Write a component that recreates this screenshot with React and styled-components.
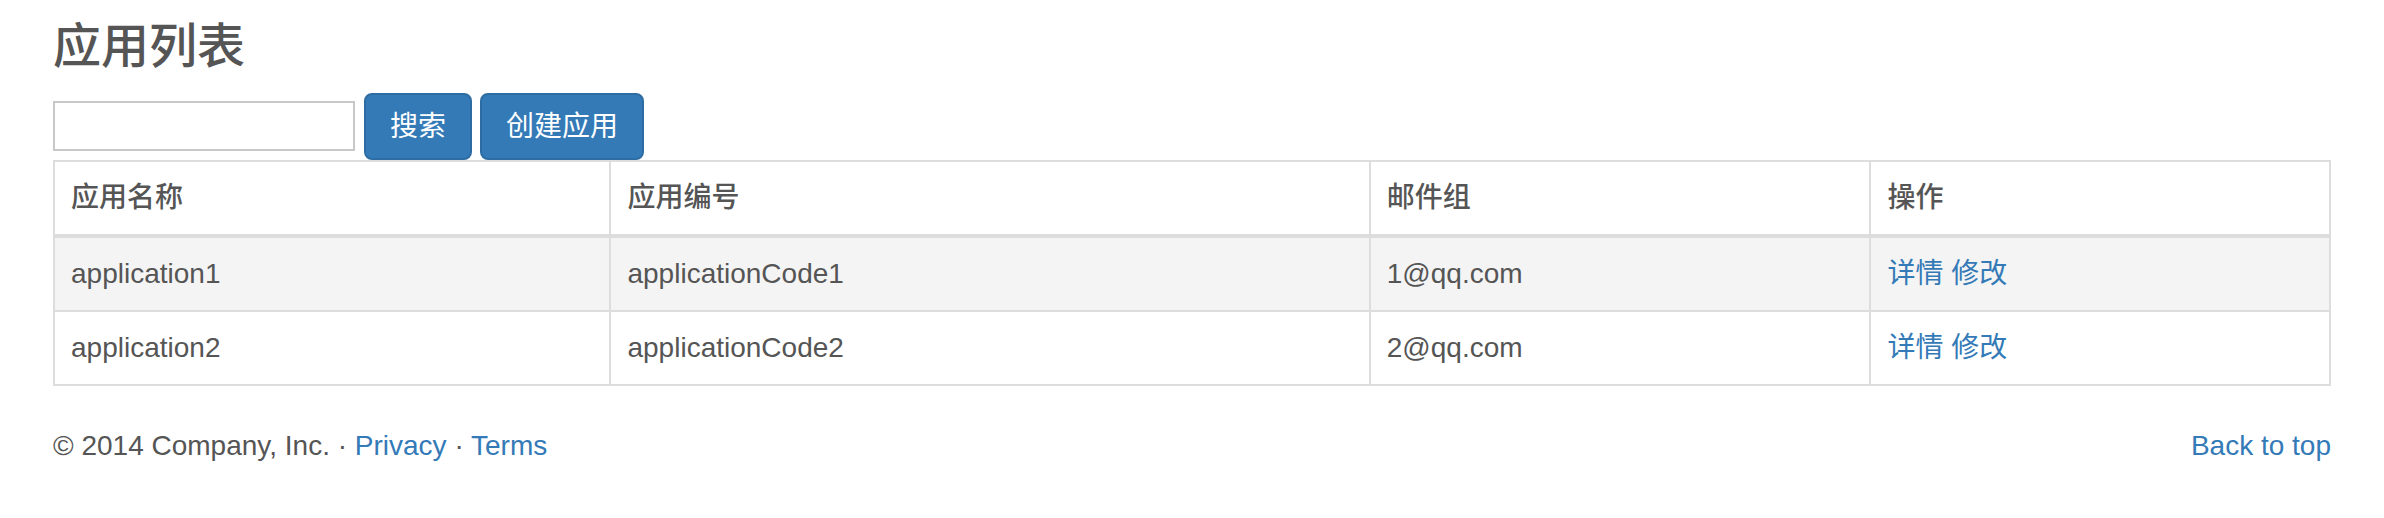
import React from 'react'
import styled, { createGlobalStyle } from 'styled-components'

const GlobalStyle = createGlobalStyle`
    body{
        margin: 0;
        background: #fff;
        font-family: "Liberation Sans", "Noto Sans CJK SC", sans-serif;
        font-size: 28px;
        line-height: 40px;
        color: #555;
    }
`

const Page = styled.div`
    padding: 20px 53px 0 53px;
`

const Title = styled.h3`
    margin: 0 0 20px 0;
    font-size: 48px;
    line-height: 53px;
    font-weight: 500;
    color: #555;
`

const Toolbar = styled.div`
    display: flex;
    align-items: center;
    height: 67px;
    .searchBox{
        width: 302px;
        height: 50px;
        box-sizing: border-box;
        border: 2px solid #c8c8c8;
        margin-right: 9px;
        margin-top: -2px;
        font-size: 28px;
        padding: 0 8px;
    }
`

const Button = styled.button`
    height: 67px;
    box-sizing: border-box;
    padding: 0 ${props => props.pad || 24}px;
    margin-right: 8px;
    background: #337ab7;
    border: 2px solid #2e6da4;
    border-radius: 8px;
    color: #fff;
    font-family: "Liberation Sans", "Noto Sans CJK SC", sans-serif;
    font-size: 28px;
    line-height: 40px;
`

const Table = styled.table`
    width: 100%;
    margin-top: 0;
    margin-bottom: 40px;
    border-collapse: collapse;
    table-layout: fixed;
    border: 2px solid #ddd;
    th, td{
        padding: 16px;
        line-height: 40px;
        text-align: left;
        border: 2px solid #ddd;
        vertical-align: top;
    }
    th{
        font-weight: 500;
        border-bottom: 4px solid #ddd;
    }
    tbody tr:nth-child(odd) td{
        background: #f4f4f4;
    }
`

const Link = styled.a`
    color: #337ab7;
    text-decoration: none;
`

const Footer = styled.div`
    display: flex;
    justify-content: space-between;
    line-height: 40px;
`

const rows = [
    { name: 'application1', code: 'applicationCode1', mail: '1@qq.com' },
    { name: 'application2', code: 'applicationCode2', mail: '2@qq.com' },
]

function App() {
    return (
        <Page>
            <GlobalStyle />
            <Title>应用列表</Title>
            <Toolbar>
                <input className="searchBox" type="text" />
                <Button>搜索</Button>
                <Button>创建应用</Button>
            </Toolbar>
            <Table>
                <colgroup>
                    <col style={{ width: '24.45%' }} />
                    <col style={{ width: '33.36%' }} />
                    <col style={{ width: '22%' }} />
                    <col />
                </colgroup>
                <thead>
                    <tr>
                        <th>应用名称</th>
                        <th>应用编号</th>
                        <th>邮件组</th>
                        <th>操作</th>
                    </tr>
                </thead>
                <tbody>
                    {rows.map(r => (
                        <tr key={r.name}>
                            <td>{r.name}</td>
                            <td>{r.code}</td>
                            <td>{r.mail}</td>
                            <td><Link href="#">详情</Link> <Link href="#">修改</Link></td>
                        </tr>
                    ))}
                </tbody>
            </Table>
            <Footer>
                <div>© 2014 Company, Inc. · <Link href="#">Privacy</Link> · <Link href="#">Terms</Link></div>
                <Link href="#">Back to top</Link>
            </Footer>
        </Page>
    )
}

export default App
